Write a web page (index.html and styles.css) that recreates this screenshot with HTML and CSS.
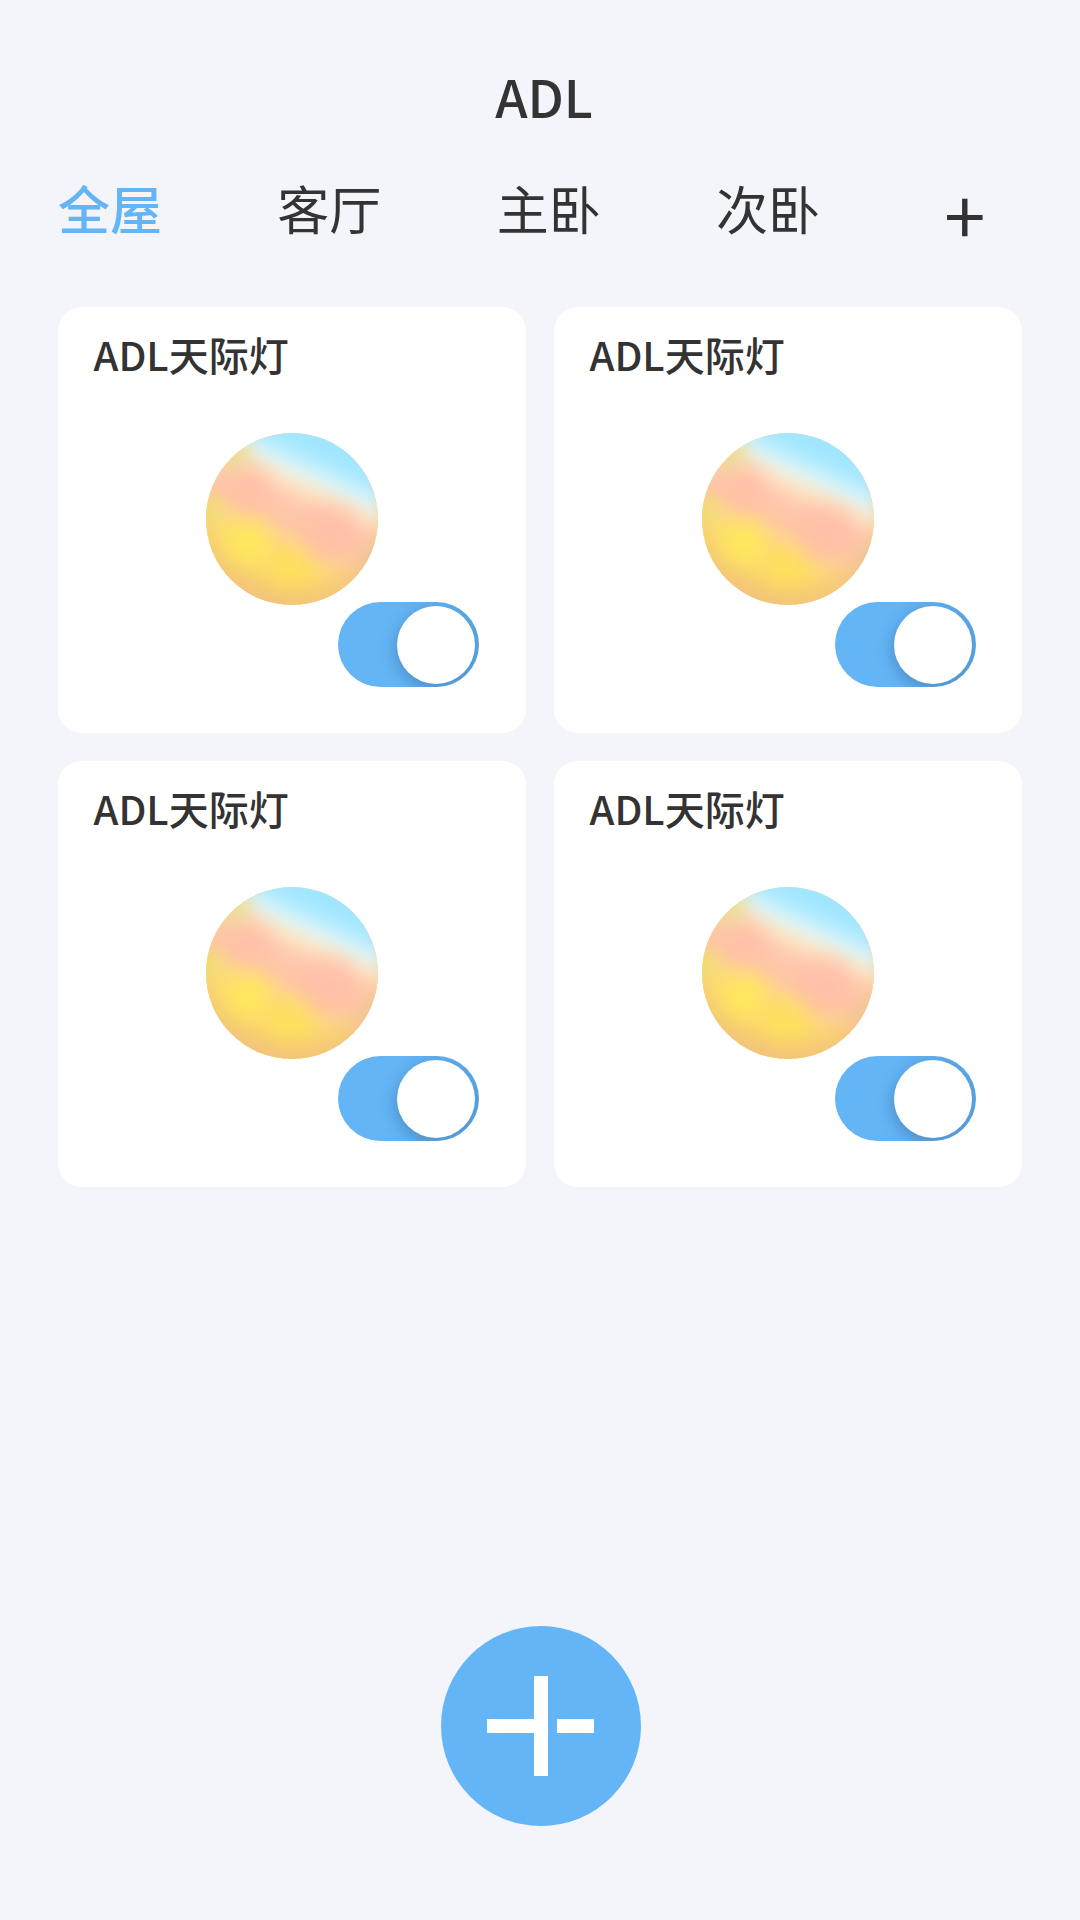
FILE: index.html
```html
<!DOCTYPE html>
<html lang="zh-CN">
<head>
    <meta charset="UTF-8">
    <meta name="viewport" content="width=device-width, initial-scale=1.0">
    <title>ADL</title>
    <link rel="stylesheet" href="styles.css">
</head>
<body>
    <div class="page">
        <h1 class="title">ADL</h1>

        <div class="tabs">
            <span class="tab active">全屋</span>
            <span class="tab">客厅</span>
            <span class="tab">主卧</span>
            <span class="tab">次卧</span>
            <span class="tab tab-add">+</span>
        </div>

        <div class="grid">
            <div class="card">
                <div class="card-name">ADL天际灯</div>
                <div class="ball"></div>
                <div class="toggle"><div class="knob"></div></div>
            </div>
            <div class="card">
                <div class="card-name">ADL天际灯</div>
                <div class="ball"></div>
                <div class="toggle"><div class="knob"></div></div>
            </div>
            <div class="card">
                <div class="card-name">ADL天际灯</div>
                <div class="ball"></div>
                <div class="toggle"><div class="knob"></div></div>
            </div>
            <div class="card">
                <div class="card-name">ADL天际灯</div>
                <div class="ball"></div>
                <div class="toggle"><div class="knob"></div></div>
            </div>
        </div>

        <!-- 添加按钮 -->
        <div class="fab">
            <svg width="200" height="200" viewBox="0 0 200 200">
                <rect x="93" y="50" width="14" height="100" fill="#fff"/>
                <rect x="46" y="93" width="47" height="14" fill="#fff"/>
                <rect x="116" y="93" width="37" height="14" fill="#fff"/>
            </svg>
        </div>
    </div>
</body>
</html>
```

FILE: styles.css
```css
* {
    box-sizing: border-box;
}

body {
    margin: 0;
    background-color: #f3f5fb;
    color: #333;
    font-family: "Noto Sans CJK SC", "Noto Sans", sans-serif;
}

.page {
    display: flex;
    flex-direction: column;
    height: 1920px;
    padding: 0 58px 94px;
}

.title {
    margin: 60px 0 0;
    padding-left: 8px;
    font-size: 52px;
    font-weight: 500;
    line-height: 72px;
    text-align: center;
}

.tabs {
    display: flex;
    gap: 115.3px;
    align-items: center;
    margin-top: 38px;
    height: 76px;
}

.tab {
    font-size: 52px;
    line-height: 76px;
}

.tab.active {
    color: #64b5f6;
    font-weight: 500;
}

.tab-add {
    margin: 10px 0 0 9px;
    font-size: 74px;
}

.grid {
    display: grid;
    grid-template-columns: 468px 468px;
    gap: 28px;
    margin-top: 61px;
}

.card {
    display: flex;
    flex-direction: column;
    align-items: center;
    height: 426px;
    padding-top: 18px;
    background: #fff;
    border-radius: 24px;
}

.card-name {
    align-self: flex-start;
    margin-left: 35.5px;
    font-size: 40px;
    font-weight: 500;
    line-height: 58px;
}

/* 灯泡的彩色球 */
.ball {
    position: relative;
    flex: none;
    width: 172px;
    height: 172px;
    margin-top: 50px;
    border-radius: 50%;
    overflow: hidden;
    background: #f6d98a;
}

.ball::before {
    content: "";
    position: absolute;
    inset: -10px;
    filter: blur(7px);
    background:
        radial-gradient(circle 112px at 50% 38%, rgba(240, 190, 120, 0) 72%, rgba(240, 190, 125, 0.7) 96%),
        radial-gradient(circle 28px at 18% 14%, #ecdc92 30%, rgba(236, 220, 146, 0)),
        radial-gradient(circle 30px at 96% 74%, #ecd0b0 30%, rgba(236, 208, 176, 0)),
        radial-gradient(circle 24px at 7% 46%, #efe070, rgba(239, 224, 112, 0)),
        radial-gradient(circle 34px at 27% 33%, rgba(255, 192, 168, 0.8) 30%, rgba(255, 192, 168, 0)),
        radial-gradient(circle 40px at 70% 57%, rgba(255, 191, 168, 0.85) 35%, rgba(255, 191, 168, 0)),
        radial-gradient(circle 34px at 27% 62%, #ffe85c 20%, rgba(255, 232, 92, 0)),
        radial-gradient(circle 34px at 50% 76%, #ffe05c 20%, rgba(255, 224, 92, 0)),
        linear-gradient(205deg,
            #9fe6ff 20%, #aeeaff 25%, #dcf5fa 31%, #fde8c4 37%, #ffcab0 43%,
            #ffc4a6 52%, #ffd490 58%, #fcdc70 66%, #fbd76a 76%, #f7cc78 86%, #e8c0a0 94%);
}

.toggle {
    display: flex;
    align-items: center;
    justify-content: flex-end;
    align-self: flex-end;
    flex: none;
    position: relative;
    width: 141px;
    height: 85px;
    margin: -3px 47px 0 0;
    padding-right: 4px;
    border-radius: 43px;
    overflow: hidden;
    background: linear-gradient(90deg, #64b5f6 45%, #5aa6e2 100%);
}

.card:nth-child(even) .toggle {
    margin-right: 46px;
}

.knob {
    width: 78px;
    height: 78px;
    border-radius: 50%;
    background: #fff;
    box-shadow: -3px 5px 14px rgba(50, 100, 150, 0.4);
}

.fab {
    display: flex;
    align-self: center;
    width: 200px;
    height: 200px;
    margin: auto 0 0 2px;
    border-radius: 50%;
    background: #64b5f6;
}
```
